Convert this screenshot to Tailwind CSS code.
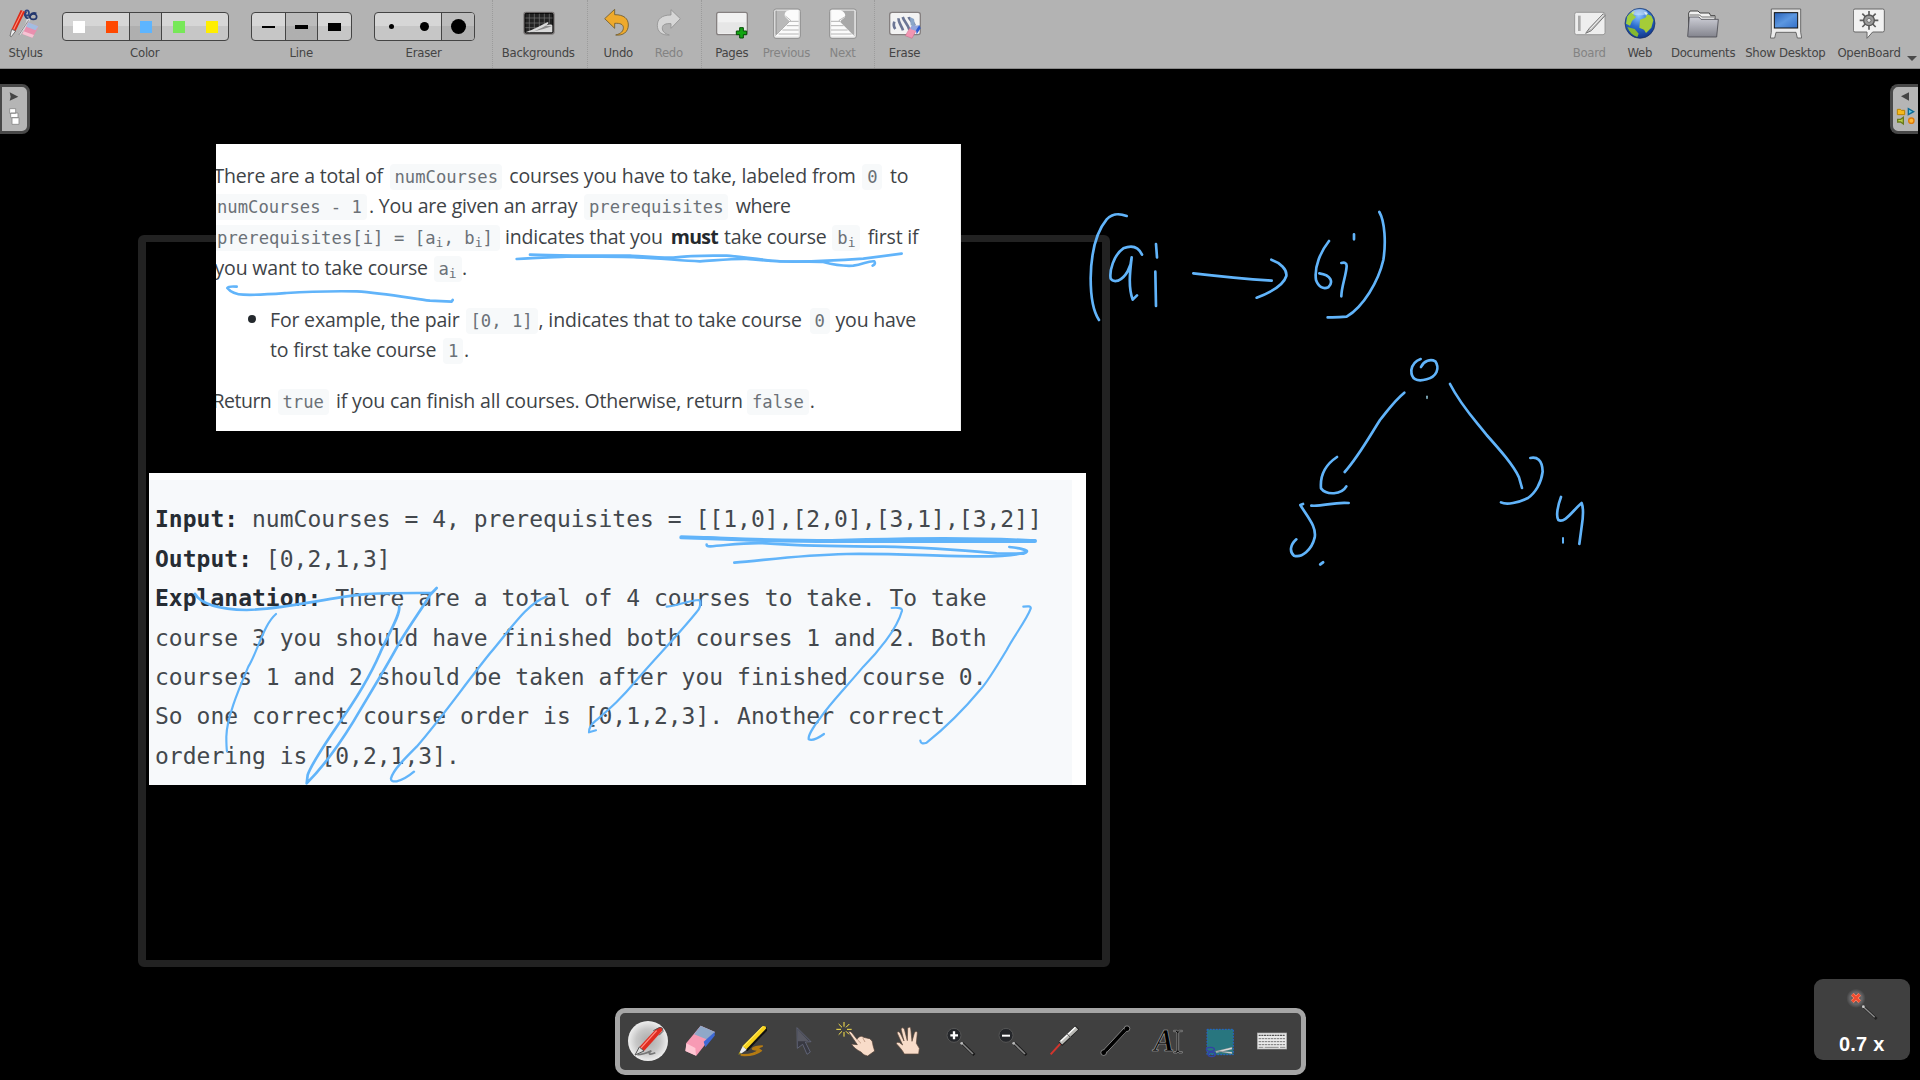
<!DOCTYPE html>
<html lang="en">
<head>
<meta charset="utf-8">
<title>OpenBoard</title>
<script src="https://cdn.jsdelivr.net/npm/@tailwindcss/browser@4"></script>
</head>
<body class="w-[1920px] h-[1080px] overflow-hidden bg-black relative">

<!-- Top toolbar -->
<header class="relative z-10 flex h-[69px] w-full bg-[#b3b3b3] border-b border-[#8a8a8a] text-[13px] tracking-[-0.27px] leading-[16px] text-[#444] font-['DejaVu_Sans_Condensed','DejaVu_Sans',sans-serif] whitespace-nowrap">
  <div class="w-[50.6px] pt-[6.7px] flex flex-col items-center">
    <svg class="w-8 h-8" viewBox="30 20 96 96"><path d="M112 40c-10-6-18 2-22 12M82 34c-8 6-4 18 6 22" fill="none" stroke="#24386e" stroke-width="6"/><ellipse cx="103" cy="49" rx="10" ry="8" fill="none" stroke="#24386e" stroke-width="5"/><ellipse cx="84" cy="38" rx="6" ry="8" fill="none" stroke="#2c4382" stroke-width="5"/><path d="M92 56L62 102M86 56L76 96" stroke="#d8d8dc" stroke-width="6"/><path d="M89 60L60 103" stroke="#666" stroke-width="2"/><path d="M88 66l30 12-4 10-14 24-30-11z" fill="#e98fae"/><path d="M88 66l30 12-8 12-28-11z" fill="#a3bde0"/><path d="M70 101l30 11 5-8-31-11z" fill="#f6c4d4"/><path d="M65 29l13 5-28 58-12-5z" fill="#dc2a18"/><path d="M70 31l3 1-28 57-3-2z" fill="#ff8c78"/><path d="M38 87l12 5-13 17-4-2z" fill="#eee" stroke="#444" stroke-width="2"/></svg>
    <span class="mt-[6.3px] w-[33.5px]">Stylus</span>
  </div>
  <div class="w-[190px] pt-3 flex flex-col items-center">
    <div class="flex h-[29px] w-[167px] overflow-hidden rounded-[4px] border border-[#444] bg-linear-to-b from-[#d6d6d6] from-50% to-[#c6c6c6] to-50%">
      <div class="w-[32px] flex items-center justify-center"><i class="size-3 bg-white"></i></div>
      <div class="w-[34px] flex items-center justify-center"><i class="size-3 bg-[#ff4800]"></i></div>
      <div class="w-[33px] flex items-center justify-center border-x border-[#444] bg-linear-to-b from-[#bcbcbc] from-50% to-[#afafaf] to-50%"><i class="size-3 bg-[#5eb5ff]"></i></div>
      <div class="w-[33px] flex items-center justify-center"><i class="size-3 bg-[#77e858]"></i></div>
      <div class="w-[33px] flex items-center justify-center"><i class="size-3 bg-[#ffee00]"></i></div>
    </div>
    <span class="mt-1 w-[31px]">Color</span>
  </div>
  <div class="w-[122px] pt-3 flex flex-col items-center">
    <div class="flex h-[29px] w-[101px] overflow-hidden rounded-[4px] border border-[#444] bg-linear-to-b from-[#d6d6d6] from-50% to-[#c6c6c6] to-50%">
      <div class="w-[33px] flex items-center justify-center"><i class="w-[13px] h-[2px] bg-black"></i></div>
      <div class="w-[33px] flex items-center justify-center border-x border-[#444] bg-linear-to-b from-[#bcbcbc] from-50% to-[#afafaf] to-50%"><i class="w-[13px] h-[4px] bg-black"></i></div>
      <div class="w-[33px] flex items-center justify-center"><i class="w-[13px] h-[8px] bg-black"></i></div>
    </div>
    <span class="mt-1 w-[24px]">Line</span>
  </div>
  <div class="w-[124px] pt-3 flex flex-col items-center">
    <div class="flex h-[29px] w-[101px] overflow-hidden rounded-[4px] border border-[#444] bg-linear-to-b from-[#d6d6d6] from-50% to-[#c6c6c6] to-50%">
      <div class="w-[33px] flex items-center justify-center"><i class="size-[5px] rounded-full bg-black"></i></div>
      <div class="w-[33px] flex items-center justify-center"><i class="size-[9px] rounded-full bg-black"></i></div>
      <div class="w-[33px] flex items-center justify-center border-l border-[#444] bg-linear-to-b from-[#bcbcbc] from-50% to-[#afafaf] to-50%"><i class="size-[15px] rounded-full bg-black"></i></div>
    </div>
    <span class="mt-1 w-[38px]">Eraser</span>
  </div>
  <div class="ml-[5.4px] w-px border-l border-dotted border-[#9c9c9c]"></div>
  <div class="w-[92px] pt-[6.7px] flex flex-col items-center">
    <svg class="w-8 h-8" viewBox="129 20 96 96"><rect x="130" y="34" width="94" height="69" rx="7" fill="#7c7878"/><rect x="135" y="39" width="84" height="59" rx="4" fill="#222" stroke="#000" stroke-width="3"/><path d="M148 40v57M163 40v50M178 40v44M193 40v40M208 40v30M136 53h82M136 68h70M136 82h40" stroke="#777" stroke-width="2"/><path d="M136 96c26-8 46-20 66-30 6 0 2 7-6 11 10-5 20-6 21-1v20z" fill="#d9d9d9"/><path d="M150 96c24-7 38-15 46-20l20 2-26 8z" fill="#8c8c8c"/></svg>
    <span class="mt-[6.3px] w-[74.5px]">Backgrounds</span>
  </div>
  <div class="ml-[2px] w-px border-l border-dotted border-[#9c9c9c]"></div>
  <div class="ml-[5px] w-[51px] pt-[6.7px] flex flex-col items-center">
    <svg class="w-8 h-8" viewBox="367 20 96 96"><path d="M375 55l30-28v16c28 0 41 12 41 31 0 21-16 33-38 30 16-4 24-12 23-23-1-9-9-13-26-12v15z" fill="#efaa2c" stroke="#6e5a2c" stroke-width="2.5" stroke-linejoin="round"/></svg>
    <span class="mt-[6.3px] w-[30px]">Undo</span>
  </div>
  <div class="w-[51.4px] pt-[6.7px] flex flex-col items-center text-[#838383]">
    <svg class="w-8 h-8" viewBox="520 20 96 96"><path d="M599 55l-28-27v16c-28 0-41 12-41 31 0 20 14 30 36 29-15-4-22-12-21-22 1-9 9-13 26-12v14z" fill="#d6d6d6" stroke="#929292" stroke-width="2.5" stroke-linejoin="round"/></svg>
    <span class="mt-[6.3px] w-[30px]">Redo</span>
  </div>
  <div class="ml-[5.6px] w-px border-l border-dotted border-[#9c9c9c]"></div>
  <div class="w-[61px] pt-[6.7px] flex flex-col items-center">
    <svg class="w-8 h-8" viewBox="708 20 96 96"><rect x="710" y="36" width="92" height="67" rx="6" fill="#f1f1f1" stroke="#858080" stroke-width="4"/><path d="M714 66h84v33H714z" fill="#e6e6e6"/><path d="M779 82h11v10h10v11h-10v10h-11v-10h-10V92h10z" fill="#12a512" stroke="#064d06" stroke-width="3"/></svg>
    <span class="mt-[6.3px] w-[34.5px]">Pages</span>
  </div>
  <div class="w-[48.6px] pt-[6.7px] flex flex-col items-center text-[#838383]">
    <svg class="w-8 h-8" viewBox="873 20 96 96"><rect x="881" y="26" width="80" height="88" rx="7" fill="#e9e9e9" stroke="#8f8f8f" stroke-width="3"/><path d="M888 31h40v72h-40z" fill="#b9b9b9"/><path d="M888 31v72" stroke="#888" stroke-width="3"/><path d="M886 106l43-43-14-14c-4-12 4-20 20-20h20v79h-68z" fill="#fbfbfb"/><path d="M886 106l46-46-16-13" fill="none" stroke="#999" stroke-width="2"/><path d="M929 63h27M920 76h36M907 89h49M896 101h60" stroke="#b4b4b4" stroke-width="3"/></svg>
    <span class="mt-[6.3px] w-[49px]">Previous</span>
  </div>
  <div class="w-[62.8px] pt-[6.7px] flex flex-col items-center text-[#838383]">
    <svg class="w-8 h-8" viewBox="1038 20 96 96"><rect x="1046" y="26" width="80" height="88" rx="7" fill="#e9e9e9" stroke="#8f8f8f" stroke-width="3"/><path d="M1080 31h40v72h-40z" fill="#a8a8a8"/><path d="M1120 106l-43-43 15-12c4-12-6-22-22-22h-19v79h69z" fill="#fbfbfb"/><path d="M1120 106l-46-46 20-12" fill="none" stroke="#999" stroke-width="2"/><path d="M1050 63h27M1050 76h38M1050 89h50M1050 101h62" stroke="#b4b4b4" stroke-width="3"/></svg>
    <span class="mt-[6.3px] w-[27px]">Next</span>
  </div>
  <div class="w-px border-l border-dotted border-[#9c9c9c]"></div>
  <div class="w-[60px] pt-[6.7px] flex flex-col items-center">
    <svg class="w-8 h-8" viewBox="1227 20 96 96"><rect x="1229" y="36" width="92" height="67" rx="7" fill="#f3f3f3" stroke="#858080" stroke-width="4"/><path d="M1243 64c-3 9-2 16 3 22M1256 54c-2 12 10 24 13 36M1268 50c4 13 17 24 20 38M1286 50c2 10 15 14 18 26" fill="none" stroke="#6c7695" stroke-width="8"/><path d="M1290 50l12 6 4 25-14-6z" fill="#8ba6c8"/><path d="M1290 82l20 6-14 26-20-8z" fill="#f195b2" stroke="#c66786" stroke-width="1.5"/><path d="M1294 77l24-2-7 18-20-7z" fill="#92a5dc"/><path d="M1318 74l4 10-12 18-2-12z" fill="#2f5cd0"/></svg>
    <span class="mt-[6.3px] w-[33px]">Erase</span>
  </div>
  <div class="ml-auto w-[39px] pt-[6.7px] flex flex-col items-center text-[#838383]">
    <svg class="w-8 h-8" viewBox="99 20 96 96"><rect x="101" y="36" width="91" height="67" rx="6" fill="#eeeeee" stroke="#8d8d8d" stroke-width="2.5"/><rect x="111" y="46" width="8" height="46" fill="#aaa"/><path d="M187 40l-42 44-11 15 17-8 41-45z" fill="#c4c4c4" stroke="#777" stroke-width="3"/><path d="M148 86l40-43" stroke="#f2f2f2" stroke-width="3"/></svg>
    <span class="mt-[6.3px] w-[34.5px]">Board</span>
  </div>
  <div class="w-[62px] pt-[6.7px] flex flex-col items-center">
    <svg class="w-8 h-8" viewBox="252 20 96 96"><defs><radialGradient id="sea" cx=".45" cy=".25" r=".8"><stop offset="0" stop-color="#8cc4ff"/><stop offset=".45" stop-color="#2c6ed0"/><stop offset="1" stop-color="#0e2f80"/></radialGradient></defs><circle cx="300" cy="69" r="45" fill="url(#sea)" stroke="#1a2f5c" stroke-width="2"/><path d="M262 48c8-10 14-14 22-16l-4 12 8 6-12 12-6 14-12-6z" fill="#9fce3e"/><path d="M300 58l16-6 6-10 12 4 6 14-6 22-16 16-6-10-14-6z" fill="#a5cc38"/><path d="M262 80l22 6 12 14-4 10c-14-4-24-14-30-30z" fill="#85b82e"/><path d="M312 34l12 4-6 8z" fill="#cfe3ee"/><ellipse cx="298" cy="36" rx="24" ry="9" fill="#fff" opacity=".4"/></svg>
    <span class="mt-[6.3px] w-[26px]">Web</span>
  </div>
  <div class="w-[63.6px] pt-[6.7px] flex flex-col items-center">
    <svg class="w-8 h-8" viewBox="441 20 96 96"><defs><linearGradient id="folder" x1="0" y1="0" x2="0" y2="1"><stop offset="0" stop-color="#cdced6"/><stop offset="1" stop-color="#83848d"/></linearGradient></defs><path d="M446 100V38l4-6h24l6 6h28l4 8h13v30z" fill="#f1f1f1" stroke="#444" stroke-width="3"/><path d="M449 44h30l6 6h37" fill="none" stroke="#555" stroke-width="2.5"/><path d="M443 108l5-58h29l6 7h52l-5 53h-85z" fill="url(#folder)" stroke="#4a4a52" stroke-width="2.5" stroke-linejoin="round"/></svg>
    <span class="mt-[6.3px] w-[64.5px]">Documents</span>
  </div>
  <div class="w-[102.8px] pt-[6.7px] flex flex-col items-center">
    <svg class="w-8 h-8" viewBox="690 20 96 96"><defs><linearGradient id="screen" x1="0" y1="0" x2="1" y2="1"><stop offset="0" stop-color="#2a62b8"/><stop offset=".5" stop-color="#5c97e0"/><stop offset="1" stop-color="#3470c8"/></linearGradient></defs><path d="M694 26h88v70l3 17h-13l-4-17h-60l-4 17h-13l3-17z" fill="#ececec" stroke="#555" stroke-width="2.5" stroke-linejoin="round"/><rect x="703" y="37" width="70" height="46" fill="url(#screen)" stroke="#111" stroke-width="3"/></svg>
    <span class="mt-[6.3px] w-[82.5px]">Show Desktop</span>
  </div>
  <div class="w-[63.2px] pt-[6.7px] flex flex-col items-center">
    <svg class="w-8 h-8" viewBox="939 20 96 96"><path d="M945 26h83q5 0 5 5v59q0 5-5 5h-30l-17 19v-19h-36q-5 0-5-5V31q0-5 5-5z" fill="#f1f1f1" stroke="#666" stroke-width="3"/><path d="M987 32v56M959 60h56M967 40l40 40M1007 40l-40 40" stroke="#5c5c5c" stroke-width="5"/><circle cx="987" cy="60" r="16" fill="#999" stroke="#555" stroke-width="4"/><circle cx="987" cy="60" r="6" fill="#e6e6e6" stroke="#555" stroke-width="2"/></svg>
    <span class="mt-[6.3px] w-[64px]">OpenBoard</span>
  </div>
  <div class="w-[19px] pl-[5.6px] pt-[56px]"><svg class="w-[10px] h-[5px]" viewBox="0 0 10 5"><path d="M0 0h10L5 5z" fill="#4a4a4a"/></svg></div>
</header>

<!-- Side palettes -->
<aside class="absolute left-0 top-[84px] w-[30px] h-[50px] rounded-r-lg border-[3px] border-l-2 border-[#484848] bg-[#b5b5b5]">
  <svg class="w-[25px] h-[44px]" viewBox="6 261 75 132"><path d="M29 277l26 13-26 12 3-12z" fill="#444"/><g fill="#fff" stroke="#888" stroke-width="2.5"><path d="M29 326h18v14H29zM32 339h22v14H32zM36 353h21v20H36z"/></g></svg>
</aside>
<aside class="absolute left-[1890px] top-[84px] w-[28px] h-[50px] rounded-l-lg border-[3px] border-r-0 border-[#484848] bg-[#b5b5b5]">
  <svg class="w-[25px] h-[44px]" viewBox="1059 261 75 132"><path d="M1107 277l-24 12 24 13z" fill="#444"/><path d="M1072 328h9l3 3h10v13h-22z" fill="#f5b91c" stroke="#b88300" stroke-width="3"/><path d="M1105 326l16 9-16 9z" fill="#61c3e6" stroke="#0c6a95" stroke-width="4"/><path d="M1090 352v20l-8-6h-9v-8h9z" fill="#bdd04a" stroke="#69791a" stroke-width="4"/><circle cx="1114" cy="362" r="8" fill="#ffb733" stroke="#dd7a0b" stroke-width="4"/></svg>
</aside>

<!-- Board: page frame and pasted images -->
<div class="absolute left-[138px] top-[235px] w-[972px] h-[732px] rounded-[6px] border-8 border-y-[7px] border-[#222]"></div>

<article class="absolute left-[216px] top-[144px] w-[745px] h-[287px] overflow-hidden bg-white pt-[16.8px] border-r border-[#f0f0f0] text-[19.5px] tracking-[-0.18px] leading-[30.67px] text-[#3e4347] font-['Open_Sans',sans-serif] whitespace-nowrap">
  <div class="flex items-baseline h-[30.67px]">
    <span class="-ml-[2.5px] w-[169px] shrink-0">There are a total of</span>
    <code class="box-content shrink-0 px-[5px] -mr-[5px] rounded bg-[#f7f9fa] text-[#6b7177] text-[17.2px] tracking-normal leading-[26px] font-['DejaVu_Sans_Mono',monospace] ml-[7px] w-[102.5px]">numCourses</code>
    <span class="ml-[12.3px] w-[345.7px] shrink-0 tracking-[-0.13px]">courses you have to take, labeled from</span>
    <code class="box-content shrink-0 px-[5px] -mr-[5px] rounded bg-[#f7f9fa] text-[#6b7177] text-[17.2px] tracking-normal leading-[26px] font-['DejaVu_Sans_Mono',monospace] ml-[7.3px] w-[10px]">0</code>
    <span class="ml-[12.7px] w-[18px] shrink-0">to</span>
  </div>
  <div class="flex items-baseline h-[30.67px]">
    <code class="box-content shrink-0 px-[5px] -mr-[5px] rounded bg-[#f7f9fa] text-[#6b7177] text-[17.2px] tracking-normal leading-[26px] font-['DejaVu_Sans_Mono',monospace] -ml-[4px] w-[145px]">numCourses - 1</code>
    <span class="ml-[7px] w-[208px] shrink-0 tracking-[-0.2px]">. You are given an array</span>
    <code class="box-content shrink-0 px-[5px] -mr-[5px] rounded bg-[#f7f9fa] text-[#6b7177] text-[17.2px] tracking-normal leading-[26px] font-['DejaVu_Sans_Mono',monospace] ml-[7px] w-[134px]">prerequisites</code>
    <span class="ml-[12.7px] w-[54px] shrink-0 tracking-[-0.4px]">where</span>
  </div>
  <div class="flex items-baseline h-[30.67px]">
    <code class="box-content shrink-0 px-[5px] -mr-[5px] rounded bg-[#f7f9fa] text-[#6b7177] text-[17.2px] tracking-[0.06px] leading-[26px] font-['DejaVu_Sans_Mono',monospace] -ml-[4px] w-[277.5px]">prerequisites[i] = [a<sub class="text-[13px]">i</sub>, b<sub class="text-[13px]">i</sub>]</code>
    <span class="ml-[10.5px] w-[157.7px] shrink-0 tracking-[-0.2px]">indicates that you</span>
    <b class="ml-[8px] w-[46.8px] shrink-0 tracking-[-0.7px] text-[#24292d]">must</b>
    <span class="ml-[6.5px] w-[102px] shrink-0 tracking-[-0.25px]">take course</span>
    <code class="box-content shrink-0 px-[5px] -mr-[5px] rounded bg-[#f7f9fa] text-[#6b7177] text-[17.2px] tracking-normal leading-[26px] font-['DejaVu_Sans_Mono',monospace] ml-[6.3px] w-[18px]">b<sub class="text-[13px]">i</sub></code>
    <span class="ml-[12.4px] w-[50.3px] shrink-0">first if</span>
  </div>
  <div class="flex items-baseline h-[30.67px]">
    <span class="-ml-[1.5px] w-[212.5px] shrink-0">you want to take course</span>
    <code class="box-content shrink-0 px-[5px] -mr-[5px] rounded bg-[#f7f9fa] text-[#6b7177] text-[17.2px] tracking-normal leading-[26px] font-['DejaVu_Sans_Mono',monospace] ml-[6.5px] w-[18px]">a<sub class="text-[13px]">i</sub></code>
    <span class="ml-[5.5px]">.</span>
  </div>
  <div class="mt-[21.3px] flex items-baseline h-[30.67px]">
    <i class="ml-[32px] size-[8px] shrink-0 rounded-full bg-[#24292d] -translate-y-[4px]"></i>
    <span class="ml-[14px] w-[189.5px] shrink-0">For example, the pair</span>
    <code class="box-content shrink-0 px-[5px] -mr-[5px] rounded bg-[#f7f9fa] text-[#6b7177] text-[17.2px] tracking-normal leading-[26px] font-['DejaVu_Sans_Mono',monospace] ml-[6px] w-[62px]">[0, 1]</code>
    <span class="ml-[6px] w-[263.5px] shrink-0 tracking-[-0.12px]">, indicates that to take course</span>
    <code class="box-content shrink-0 px-[5px] -mr-[5px] rounded bg-[#f7f9fa] text-[#6b7177] text-[17.2px] tracking-normal leading-[26px] font-['DejaVu_Sans_Mono',monospace] ml-[7.5px] w-[10px]">0</code>
    <span class="ml-[11px] w-[81px] shrink-0">you have</span>
  </div>
  <div class="flex items-baseline h-[30.67px]">
    <span class="ml-[54px] w-[166.5px] shrink-0">to first take course</span>
    <code class="box-content shrink-0 px-[5px] -mr-[5px] rounded bg-[#f7f9fa] text-[#6b7177] text-[17.2px] tracking-normal leading-[26px] font-['DejaVu_Sans_Mono',monospace] ml-[6.5px] w-[10px]">1</code>
    <span class="ml-[6px]">.</span>
  </div>
  <div class="mt-[20px] flex items-baseline h-[30.67px]">
    <span class="-ml-[3.5px] w-[57.5px] shrink-0 tracking-[-0.5px]">Return</span>
    <code class="box-content shrink-0 px-[5px] -mr-[5px] rounded bg-[#f7f9fa] text-[#6b7177] text-[17.2px] tracking-normal leading-[26px] font-['DejaVu_Sans_Mono',monospace] ml-[7.5px] w-[41px]">true</code>
    <span class="ml-[12.5px] w-[404px] shrink-0 tracking-[-0.16px]">if you can finish all courses. Otherwise, return</span>
    <code class="box-content shrink-0 px-[5px] -mr-[5px] rounded bg-[#f7f9fa] text-[#6b7177] text-[17.2px] tracking-normal leading-[26px] font-['DejaVu_Sans_Mono',monospace] ml-[7px] w-[51.8px]">false</code>
    <span class="ml-[6px]">.</span>
  </div>
</article>

<article class="absolute left-[149px] top-[473px] w-[937px] h-[312px] bg-white pt-[7px] pr-[14px]">
  <pre class="h-[305px] bg-[#f7f9fb] pl-[6px] pt-[20.4px] text-[22.97px] tracking-[0.03px] leading-[39.4px] text-[#43484d] font-['DejaVu_Sans_Mono',monospace]"><b class="text-[#262c33]">Input:</b> numCourses = 4, prerequisites = [[1,0],[2,0],[3,1],[3,2]]
<b class="text-[#262c33]">Output:</b> [0,2,1,3]
<b class="text-[#262c33]">Explanation:</b> There are a total of 4 courses to take. To take
course 3 you should have finished both courses 1 and 2. Both
courses 1 and 2 should be taken after you finished course 0.
So one correct course order is [0,1,2,3]. Another correct
ordering is [0,2,1,3].</pre>
</article>

<!-- Pen strokes; each group is drawn at three units per pixel -->
<svg class="absolute left-0 top-0 w-[1920px] h-[1080px]" viewBox="0 0 1920 1080" fill="none" stroke="#61b4fa" stroke-width="8" stroke-linecap="round" stroke-linejoin="round">
  <g transform="translate(200 130) scale(.33333)">
    <path d="M110 470C95 469 84 470 82 474C90 485 110 494 130 494C170 496 220 492 260 489C330 484 400 483 470 484C550 489 640 506 690 512L755 515L758 510"/>
    <path d="M950 387C1000 383 1050 382 1100 380C1180 381 1260 379 1310 382C1380 384 1440 392 1500 394C1550 391 1600 386 1640 387C1700 392 1740 396 1790 395C1860 394 1930 390 1990 386L2105 371"/>
    <path d="M990 374C1060 377 1120 376 1180 377L1290 377C1340 380 1380 384 1420 383C1460 377 1520 376 1580 377C1640 382 1700 391 1740 394C1790 394 1850 394 1870 396C1900 404 1930 409 1960 407C1990 403 2005 392 2023 394Q2028 402 2018 407"/>
  </g>
  <g transform="translate(600 460) scale(.33333)">
    <path d="M244 232C400 238 560 243 700 243L1305 243" stroke-width="12"/><path d="M244 232L320 232C480 245 640 244 800 238C950 234 1150 232 1305 242"/>
    <path d="M320 254Q320 259 330 259C380 256 440 246 500 250C620 260 740 258 850 260C980 262 1080 270 1190 280L1270 281Q1284 276 1280 272C1268 266 1248 263 1228 261"/>
    <path d="M403 308C500 300 600 285 740 282C880 280 1000 288 1120 289C1190 290 1240 288 1276 277"/>
    <path d="M200 440C240 436 260 422 299 420Q305 440 290 456C230 530 170 590 110 660C60 720 30 745-16 785Q-34 800-33 817L-12 811" stroke-width="6.5"/>
    <path d="M875 444C895 442 907 444 906 452C890 510 830 580 790 620C740 680 690 730 660 775C640 800 624 828 626 838Q640 845 672 822" stroke-width="6.5"/>
    <path d="M1270 440C1285 438 1294 438 1292 446C1280 480 1240 530 1220 570C1190 620 1160 670 1140 690C1090 750 1040 800 980 848Q962 854 961 842" stroke-width="6.5"/>
  </g>
  <g transform="translate(130 460) scale(.33333)">
    <path d="M195 402C215 435 270 448 350 450C480 446 580 415 700 403C760 398 830 399 905 399"/>
    <path d="M438 462C400 495 385 570 355 620C330 680 290 770 289 830Q289 860 291 874" stroke-width="6.5"/>
    <path d="M807 438C815 460 770 530 750 580C720 650 670 730 620 800C580 860 545 910 533 945L530 970C590 910 630 850 670 785C720 700 770 620 810 545C850 480 880 440 900 405L920 384"/>
    <path d="M1250 410C1190 430 1140 510 1080 580C1000 680 930 780 860 860C820 900 790 930 783 955Q782 966 800 964Q825 958 852 935" stroke-width="7"/>
  </g>
  <g transform="translate(1070 200) scale(.33333)">
    <path d="M170 48C150 41 130 38 110 58C75 100 63 170 62 235C62 290 70 335 87 360M216 164C205 140 185 135 160 145C130 165 118 215 122 236Q128 246 144 242C168 232 184 200 185 172C180 215 174 260 188 299L201 286"/>
    <path d="M258 132L261 172M256 215L258 318M370 220C440 228 520 236 605 242M604 179C630 188 652 208 649 228C640 258 600 278 560 293"/>
    <path d="M777 123C752 155 732 200 738 240C746 262 760 268 775 262C790 248 785 225 748 220M852 103L852 118M814 189Q830 185 830 198C829 225 814 260 814 289M928 36C945 65 948 130 940 180C925 245 880 320 830 350Q800 353 773 352"/>
  </g>
  <g transform="translate(1270 340) scale(.33333)">
    <path d="M453 81C462 62 482 56 496 64C510 85 500 110 470 118C440 126 423 118 424 90C427 72 438 62 452 57M403 158C370 185 355 210 330 240C295 295 265 350 224 396M540 132C575 200 615 240 650 285C690 330 730 375 747 412L756 444"/>
    <path d="M201 351C165 375 150 410 153 445C170 467 215 464 229 439M124 497C160 500 190 485 236 489M99 492L91 495C115 535 140 560 134 593C125 630 95 655 72 647C58 635 60 615 79 598"/>
    <path d="M781 354C800 350 817 358 818 395C814 430 795 460 774 474C745 488 710 496 693 487M873 471C862 500 858 530 865 540C885 550 905 515 935 489Q943 510 935 560L928 612"/>
    <path d="M471 169v6" stroke="#89b9c9" stroke-width="5"/><path d="M151 673l8-6" stroke-width="9"/><path d="M879 594v14" stroke-width="6"/>
  </g>
</svg>

<!-- Tool palette; buttons sit on a 52px pitch -->
<nav class="absolute left-[615px] top-[1008px] w-[691px] h-[67px] rounded-[10px] border-[5px] border-[#a6a6a6] bg-[#404040] flex items-center pl-[2px]">
  <svg class="w-[52px] h-[57px] shrink-0" viewBox="66 39 156 171"><defs><radialGradient id="disc"><stop offset="0" stop-color="#aaa"/><stop offset=".6" stop-color="#c7c7c7"/><stop offset="1" stop-color="#eee"/></radialGradient></defs><circle cx="144" cy="123" r="60" fill="url(#disc)"/><path d="M112 164c20 0 34-8 42-12-12 10-6 14 12 6" fill="none" stroke="#777" stroke-width="5"/><path d="M118 141l50-54q12-10 20-2l-2 8-54 60z" fill="#df2b20"/><path d="M122 145l48-53" stroke="#ff8b80" stroke-width="4"/><path d="M118 141l14 12-27 12z" fill="#ddd" stroke="#555" stroke-width="3"/><path d="M160 92l20-10q10 0 9 12l-12 12" fill="none" stroke="#555" stroke-width="3"/></svg>
  <svg class="w-[52px] h-[57px] shrink-0" viewBox="221 39 156 171"><path d="M301 77l43 19-56 71-32-14 2-24z" fill="#f79ab4"/><path d="M301 77l43 19-18 25-45-18z" fill="#8fa8c8"/><path d="M343 96v11l-28 35-5-17z" fill="#3e69d6"/><path d="M258 130l27 14 2 23-32-14z" fill="#ffc7d4"/></svg>
  <svg class="w-[52px] h-[57px] shrink-0" viewBox="380 39 156 171"><path d="M424 164c32 2 48-8 52-14-30 0-18-10 14-12-22 8-8 10-4 14-12 10-34 16-62 14" fill="#b57b12" stroke="#b57b12" stroke-width="4"/><path d="M503 80v12l-58 61-8-3z" fill="#111"/><path d="M490 78q10-2 11 7l-60 63-12-9z" fill="#f7d21d"/><path d="M490 80l-58 60" stroke="#fff07a" stroke-width="3"/><path d="M430 139l12 10-15 11-8 1z" fill="#eee"/><path d="M420 155l6 6-9 3z" fill="#9b8b1c"/></svg>
  <svg class="w-[52px] h-[57px] shrink-0" viewBox="535 39 156 171"><path d="M592 83l42 42-17 1 15 30-10 7-13-30-16 12z" fill="#383942" stroke="#666a80" stroke-width="2.5"/><path d="M594 88l34 36-34 0z" fill="#585963"/></svg>
  <svg class="w-[52px] h-[57px] shrink-0" viewBox="685 39 156 171"><path d="M740 95q8-3 12 5l14 18c6-9 14-12 20-6l18 4q10 5 10 20l5 17-21 15q-12-1-20-12c-12-6-22-13-29-24l18 2z" fill="#f8dcc9" stroke="#4c3930" stroke-width="2"/><path d="M768 120l10 10M783 113l7 13" stroke="#a67e68" stroke-width="2"/><path d="M727 66v14M727 96v14M704 88h14M736 88h14M711 72l10 10M733 94l9 9M743 72l-10 10M711 104l10-10" stroke="#ffe74c" stroke-width="3"/></svg>
  <svg class="w-[52px] h-[57px] shrink-0" viewBox="845 39 156 171"><path d="M912 162c-6-12-14-20-24-31q2-6 10-3l9 7-17-37q3-6 9 0l12 25-9-36q5-7 10 0l9 35 1-38q6-5 9 0l4 40 8-28q7-4 8 2l-3 32 9 15-2 17z" fill="#f8dcc9" stroke="#5a4538" stroke-width="2"/></svg>
  <svg class="w-[52px] h-[57px] shrink-0" viewBox="-47 39 156 171"><circle cx="13" cy="106" r="21" fill="#24262a" stroke="#555" stroke-width="3"/><path d="M2 106h23M13 94v24" stroke="#fff" stroke-width="7"/><path d="M38 130L74 165" stroke="#181818" stroke-width="9"/><path d="M36 129L70 162" stroke="#858585" stroke-width="5"/><circle cx="36" cy="130" r="4" fill="#bbb"/></svg>
  <svg class="w-[52px] h-[57px] shrink-0" viewBox="109 39 156 171"><circle cx="169" cy="106" r="21" fill="#24262a" stroke="#555" stroke-width="3"/><path d="M157 107h24" stroke="#fff" stroke-width="6"/><path d="M194 130l36 35" stroke="#181818" stroke-width="9"/><path d="M192 129l34 33" stroke="#858585" stroke-width="5"/><circle cx="192" cy="130" r="4" fill="#bbb"/></svg>
  <svg class="w-[52px] h-[57px] shrink-0" viewBox="264 39 156 171"><path d="M302 163l32-35" stroke="#d3352d" stroke-width="6"/><path d="M331 132l51-50" stroke="#1e1e1e" stroke-width="16"/><path d="M332 129l48-45" stroke="#b9b9b5" stroke-width="13"/><path d="M332 124l44-42" stroke="#fff" stroke-width="4"/><path d="M351 101l11 12" stroke="#555" stroke-width="3"/></svg>
  <svg class="w-[52px] h-[57px] shrink-0" viewBox="421 39 156 171"><g fill="#000" stroke="#999" stroke-width="2.5"><path d="M459 153l66-71 9 8-66 71z"/><circle cx="462" cy="158" r="8.5"/><circle cx="532" cy="86" r="8.5"/></g><path d="M462 158l70-72" stroke="#000" stroke-width="8"/></svg>
  <svg class="w-[52px] h-[57px] shrink-0" viewBox="576 39 156 171"><g font-family="Liberation Serif, serif" font-style="italic" font-weight="bold" font-size="92" stroke="#aaa" stroke-width="1.8"><text x="611" y="154">A</text></g><path d="M671 91h9l4 3 4-3h9v4h-9l-2 4v52l2 4h9v4h-9l-4-3-4 3h-9v-4h7l3-4V99l-3-4h-7z" fill="#000" stroke="#aaa" stroke-width="2"/></svg>
  <svg class="w-[52px] h-[57px] shrink-0" viewBox="733 39 156 171"><rect x="772" y="88" width="79" height="76" fill="#28767f" stroke="#2363d2" stroke-width="3" stroke-dasharray="5 4"/><path d="M798 154l49-12v6l-47 10zM798 153l49 8v-5z" fill="#e0e0e0" stroke="#777" stroke-width="1"/><ellipse cx="782" cy="148" rx="12" ry="6" fill="none" stroke="#3440a5" stroke-width="4"/><ellipse cx="786" cy="163" rx="11" ry="7" fill="none" stroke="#3440a5" stroke-width="4"/></svg>
  <svg class="w-[52px] h-[57px] shrink-0" viewBox="888 39 156 171"><rect x="922" y="99" width="88" height="48" fill="#e9e9e9" stroke="#aaa" stroke-width="2"/><path d="M926 106h80" stroke="#555" stroke-width="4" stroke-dasharray="6 2"/><path d="M926 116h80M926 125h80M926 134h80" stroke="#777" stroke-width="3" stroke-dasharray="7 2"/><path d="M926 142h14M944 142h42M990 142h16" stroke="#888" stroke-width="3"/></svg>
</nav>

<!-- Zoom indicator -->
<div class="absolute left-[1814px] top-[979px] w-[96px] h-[81px] rounded-[9px] bg-[#404040] flex flex-col items-center">
  <svg class="mt-[9px] w-[34px] h-[32px]" viewBox="167 84 102 96"><defs><radialGradient id="lens"><stop offset="0" stop-color="#444"/><stop offset=".6" stop-color="#68686a"/><stop offset="1" stop-color="#404040"/></radialGradient></defs><circle cx="200" cy="115" r="29" fill="url(#lens)"/><path d="M189 103l22 22M211 103l-22 22" stroke="#ff8a6d" stroke-width="11"/><path d="M189 103l22 22M211 103l-22 22" stroke="#ee4b2f" stroke-width="7"/><path d="M224 142l38 35" stroke="#222" stroke-width="8"/><path d="M222 140l34 32" stroke="#8c8c8c" stroke-width="4"/><circle cx="222" cy="140" r="4" fill="#ccc"/></svg>
  <span class="mt-[12px] w-[46px] text-[20px] tracking-[0.2px] leading-[24px] font-bold text-white whitespace-nowrap font-['Liberation_Sans',sans-serif]">0.7 x</span>
</div>
</body>
</html>
